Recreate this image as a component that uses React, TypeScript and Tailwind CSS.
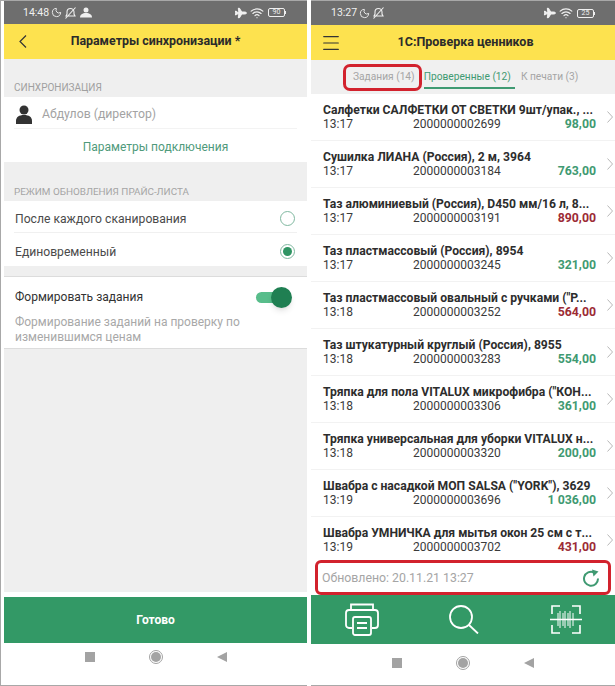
import { Menu, Moon, Plane, Wifi } from "lucide-react";

const items = [
  { name: "Салфетки САЛФЕТКИ ОТ СВЕТКИ 9шт/упак., ...", time: "13:17", code: "2000000002699", price: "98,00", up: true },
  { name: "Сушилка ЛИАНА (Россия), 2 м, 3964", time: "13:17", code: "2000000003184", price: "763,00", up: true },
  { name: "Таз алюминиевый (Россия), D450 мм/16 л, 8...", time: "13:17", code: "2000000003191", price: "890,00", up: false },
  { name: "Таз пластмассовый (Россия), 8954", time: "13:17", code: "2000000003245", price: "321,00", up: true },
  { name: "Таз пластмассовый овальный с ручками (\"Р...", time: "13:18", code: "2000000003252", price: "564,00", up: false },
  { name: "Таз штукатурный круглый (Россия), 8955", time: "13:18", code: "2000000003283", price: "554,00", up: true },
  { name: "Тряпка для пола VITALUX микрофибра (\"КОН...", time: "13:18", code: "2000000003306", price: "361,00", up: true },
  { name: "Тряпка универсальная для уборки VITALUX н...", time: "13:18", code: "2000000003320", price: "200,00", up: true },
  { name: "Швабра с насадкой МОП SALSA (\"YORK\"), 3629", time: "13:19", code: "2000000003696", price: "1 036,00", up: true },
  { name: "Швабра УМНИЧКА для мытья окон 25 см с т...", time: "13:19", code: "2000000003702", price: "431,00", up: false },
];

function StatusBar({ time, battery, alarm, className }: { time: string; battery: string; alarm?: boolean; className: string }) {
  return (
    <div className={`bg-[#6e6e6e] text-[#f0f0f0] flex items-center text-[10.5px] ${className}`}>
      <span>{time}</span>
      <Moon size={11} className="ml-[2px]" />
      <svg width="13" height="12" viewBox="0 0 13 12" className="ml-[2px]" fill="none" stroke="currentColor" strokeWidth="1.1">
        <path d="M2 9h9L10 7V5a3.500 3.500 0 0 0-7 0v2zM1.500 11.500 11.500 .5" />
      </svg>
      {alarm && (
        <svg width="12" height="11" viewBox="0 0 12 11" className="ml-[3px]" fill="currentColor">
          <circle cx="6" cy="3" r="2.500" />
          <path d="M0 10.500c0-3 2.500-4.500 6-4.500s6 1.500 6 4.500z" />
        </svg>
      )}
      <Plane size={12} fill="currentColor" className="ml-auto rotate-45" />
      <Wifi size={14} className="ml-[4px]" />
      <div className="ml-[4px] w-[17px] h-[9px] border border-[#f0f0f0] rounded-[2px] text-[7px] leading-[7px] text-center">{battery}</div>
      <div className="w-[1px] h-[3px] bg-[#f0f0f0]" />
    </div>
  );
}

function NavBar({ className }: { className: string }) {
  return (
    <div className={`bg-white flex items-start justify-center gap-[54px] ${className}`}>
      <div className="w-[10px] h-[10px] mt-[2px] bg-[#a3a3a3]" />
      <div className="w-[14px] h-[14px] rounded-full border border-[#a3a3a3] flex items-center justify-center">
        <div className="w-[10px] h-[10px] rounded-full bg-[#a3a3a3]" />
      </div>
      <div className="w-0 h-0 mt-[2px] border-y-[5px] border-y-transparent border-r-[10px] border-r-[#a3a3a3]" />
    </div>
  );
}

function SettingsPhone() {
  return (
    <div className="w-[307px] h-[686px] pl-[3px] border-l border-l-[#a8a8a8] border-y border-y-[#a8a8a8] bg-white flex flex-col">
      <StatusBar time="14:48" battery="90" alarm className="h-[23px] pl-[19px] pr-[21px]" />
      <div className="h-[35px] bg-[#fde24f] flex items-center relative justify-center">
        <svg width="8" height="13" viewBox="0 0 8 13" className="absolute left-[15px]" fill="none" stroke="#333" strokeWidth="1.2">
          <path d="M7 .5 1 6.500 7 12.500" />
        </svg>
        <span className="text-[12.4px] font-bold text-[#2b2b2b]">Параметры синхронизации *</span>
      </div>
      <div className="bg-[#efefef] flex-1 flex flex-col">
        <div className="h-[38px] flex items-end pl-[10px] pb-[2px] text-[10px] text-[#a0a0a0]">СИНХРОНИЗАЦИЯ</div>
        <div className="h-[65px] bg-white">
          <div className="h-[32px] mx-[10px] pt-[4px] flex items-center border-b border-[#f3f3f3]">
            <svg width="18" height="19" viewBox="0 0 18 19" className="ml-[1px]" fill="#333">
              <circle cx="9" cy="5" r="4.500" />
              <path d="M1 19v-3c0-4 3-6 8-6s8 2 8 6v3z" />
            </svg>
            <span className="ml-[9px] text-[12.25px] text-[#a3a3a3]">Абдулов (директор)</span>
          </div>
          <div className="h-[33px] pt-[3px] flex items-center justify-center text-[12px] text-[#4f9a7b]">Параметры подключения</div>
        </div>
        <div className="h-[39px] flex items-end pl-[10px] pb-[1px] text-[9.9px] text-[#a5a5a5]">РЕЖИМ ОБНОВЛЕНИЯ ПРАЙС-ЛИСТА</div>
        <div className="h-[65px] bg-white px-[10px]">
          <div className="h-[32px] flex items-center justify-between border-b border-[#f0f0f0] text-[12.15px] text-[#4a4a4a] pt-[3px]">
            <span className="ml-[1px] mt-[2px]">После каждого сканирования</span>
            <div className="w-[15px] h-[15px] mr-[2px] rounded-full border border-[#7fb8a0]" />
          </div>
          <div className="h-[33px] flex items-center justify-between text-[12.15px] text-[#4a4a4a] pt-[3px]">
            <span className="ml-[1px] mt-[2px]">Единовременный</span>
            <div className="w-[15px] h-[15px] mr-[2px] rounded-full border border-[#7fb8a0] flex items-center justify-center">
              <div className="w-[9px] h-[9px] rounded-full bg-[#2f9463]" />
            </div>
          </div>
        </div>
        <div className="h-[10px]" />
        <div className="h-[73px] bg-white border-y border-[#dcdcdc] px-[10px]">
          <div className="h-[38px] pt-[2px] flex items-center justify-between text-[12.05px] text-[#333]">
            <span className="ml-[1px]">Формировать задания</span>
            <div className="relative w-[35px] h-[11px] mr-[6px] rounded-full bg-[#58bd8b]">
              <div className="absolute right-[-1px] top-[-5px] w-[21px] h-[21px] rounded-full bg-[#1f7f52] shadow-md" />
            </div>
          </div>
          <div className="ml-[1px] text-[12px] leading-[15px] text-[#a8a8a8]">Формирование заданий на проверку по изменившимся ценам</div>
        </div>
        <div className="flex-1" />
      </div>
      <div className="h-[5px] bg-white" />
      <div className="h-[46px] bg-[#339966] flex items-center justify-center text-[12px] font-bold text-white">Готово</div>
      <NavBar className="h-[42px] pt-[7px]" />
    </div>
  );
}

function ListPhone() {
  return (
    <div className="w-[304px] h-[686px] border-y border-y-[#a8a8a8] bg-white flex flex-col">
      <StatusBar time="13:27" battery="25" className="h-[24px] pl-[20px] pr-[20px]" />
      <div className="h-[35px] bg-[#fde24f] flex items-center relative justify-center">
        <Menu size={22} strokeWidth={1.2} className="absolute left-[9px] text-[#333]" />
        <span className="text-[12.5px] font-bold text-[#2b2b2b] ml-[5px]">1С:Проверка ценников</span>
      </div>
      <div className="h-[34px] bg-[#f0f0f0] flex items-start pt-[9px] text-[10.2px] text-[#a5a5a5] relative">
        <div className="absolute left-[32px] top-[4px] w-[79px] h-[27px] rounded-[7px] border-[3px] border-[#d2222d]" />
        <span className="ml-[42px]">Задания (14)</span>
        <span className="ml-[9px] text-[#3f9a72] border-b-2 border-[#3f9a72] h-[20px] pr-[4px]">Проверенные (12)</span>
        <span className="ml-[6px]">К печати (3)</span>
      </div>
      <div className="flex-1 flex flex-col bg-[#f2f2f2] gap-[1px] overflow-hidden">
        {items.map((item) => (
          <div key={item.code} className="h-[46px] shrink-0 bg-white flex items-center pl-[12px] pr-[2px]">
            <div className="flex-1 min-w-0">
              <div className="text-[12.15px] font-bold text-[#2d2d2d] leading-[14px] whitespace-nowrap">{item.name}</div>
              <div className="flex items-baseline text-[12px] leading-[15px] text-[#3a3a3a]">
                <span className="w-[90px]">{item.time}</span>
                <span>{item.code}</span>
                <span className={`ml-auto font-bold text-[12.3px] ${item.up ? "text-[#3f9a72]" : "text-[#9c2b35]"}`}>{item.price}</span>
              </div>
            </div>
            <svg width="6" height="12" viewBox="0 0 6 12" className="ml-[11px]" fill="none" stroke="#b0b0b0" strokeWidth="0.9">
              <path d="M.5 .5 5.500 6 .5 11.500" />
            </svg>
          </div>
        ))}
      </div>
      <div className="h-[35px] mx-[4px] rounded-[6px] border-[3px] border-[#d2222d] flex items-center justify-between pl-[4px] pr-[8px] pt-[1px] text-[12.3px] text-[#a5a5a5] shrink-0">
        <span>Обновлено: 20.11.21 13:27</span>
        <svg width="18" height="18" viewBox="0 0 18 18" fill="none" stroke="#3f9a72" strokeWidth="2">
          <path d="M12 3.400A7 7 0 1 0 16 9.500" />
          <path d="M10 .5 16.500 2.500 11.500 7.500z" fill="#3f9a72" stroke="none" />
        </svg>
      </div>
      <div className="h-[49px] shrink-0 bg-[#339966] flex items-center pl-[34px] text-white">
        <svg width="34" height="33" viewBox="0 0 34 33" fill="none" stroke="currentColor" strokeWidth="1.8">
          <path d="M6 7V1.500h22V7M7 25H4a3 3 0 0 1-3-3V10a3 3 0 0 1 3-3h26a3 3 0 0 1 3 3v12a3 3 0 0 1-3 3h-3" />
          <rect x="8" y="14" width="18" height="18" rx="2" />
          <path d="M12 20h10M12 25h10" />
        </svg>
        <svg width="30" height="29" viewBox="0 0 30 29" className="ml-[70px]" fill="none" stroke="currentColor" strokeWidth="1.8">
          <circle cx="12" cy="12" r="11" />
          <path d="M20 20 29 28.500" />
        </svg>
        <svg width="32" height="29" viewBox="0 0 32 29" className="ml-[71px]" fill="none" stroke="currentColor" strokeWidth="1.6">
          <path d="M2 9V1h8M22 1h8v8M2 20v8h8M22 28h8v-8M0 14.500h32" />
          <path strokeWidth="1" d="M8 8v13M10 6v17M13 8v13M15 6v17M18 8v13M20 6v17M23 8v13" />
        </svg>
      </div>
      <NavBar className="h-[41px] shrink-0 pt-[12px]" />
    </div>
  );
}

export default function App() {
  return (
    <div className="w-[615px] h-[686px] bg-white flex gap-[4px] overflow-hidden font-['Roboto',sans-serif]">
      <SettingsPhone />
      <ListPhone />
    </div>
  );
}
